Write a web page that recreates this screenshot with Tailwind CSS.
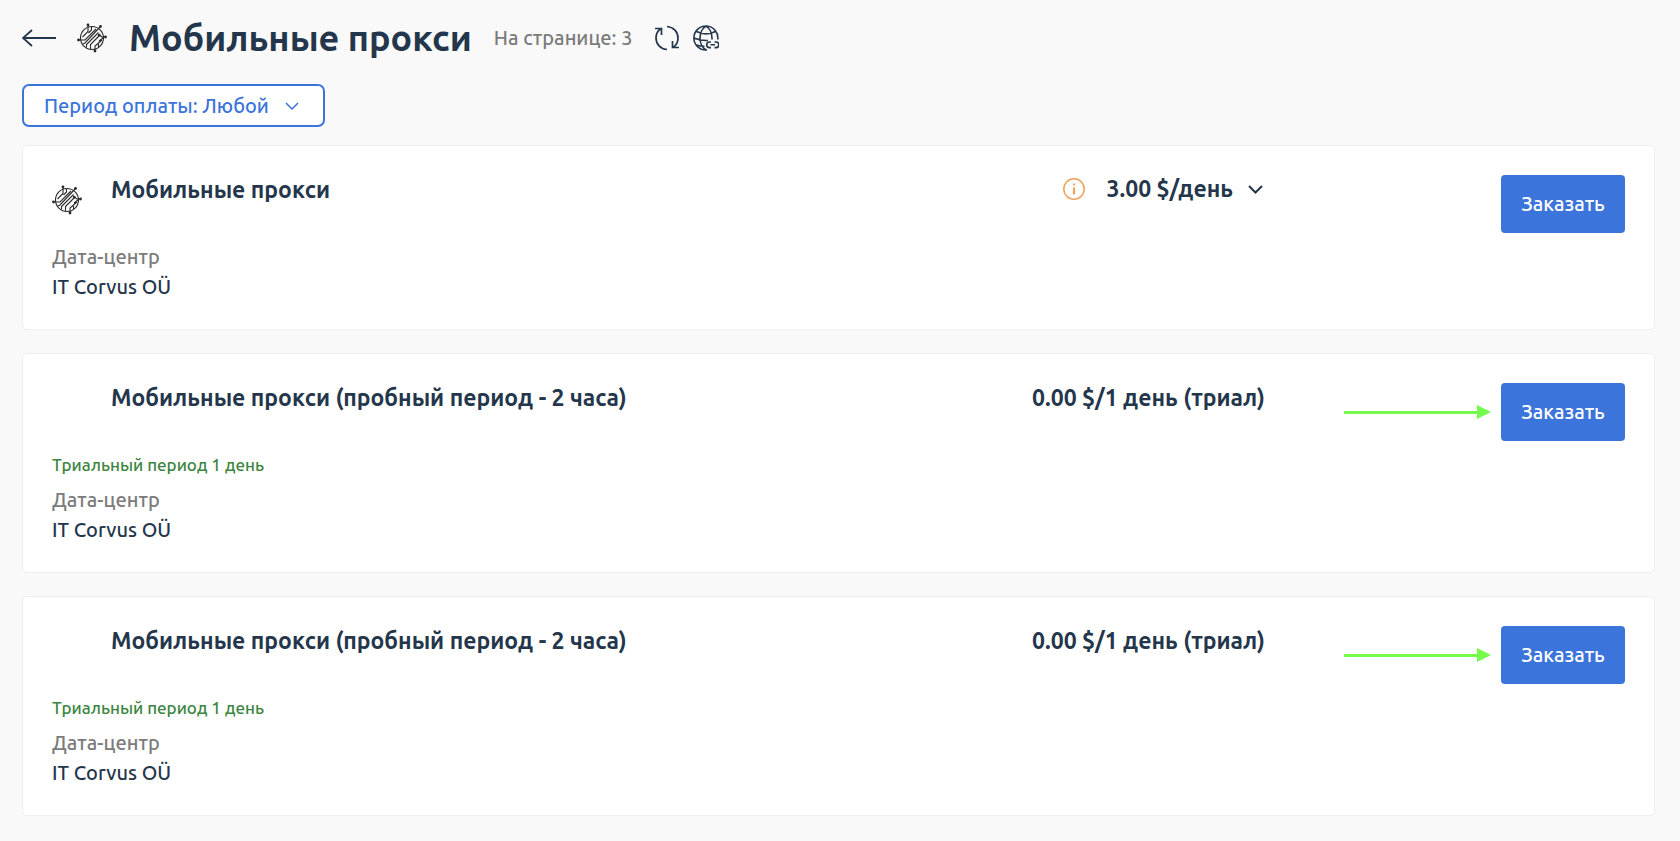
<!DOCTYPE html>
<html lang="ru">
<head>
    <meta charset="UTF-8">
    <meta name="viewport" content="width=device-width, initial-scale=1.0">
    <title>Мобильные прокси</title>
    <script src="https://cdn.jsdelivr.net/npm/@tailwindcss/browser@4"></script>
</head>

<body class="min-h-screen bg-[#f9f9f9] font-['Ubuntu','Noto_Sans',sans-serif] text-[#24364b]">

    <!-- shared icons -->
    <svg class="hidden" xmlns="http://www.w3.org/2000/svg">
        <symbol id="logo" viewBox="0 0 30 30">
            <g fill="none" stroke="#2a2a2a" stroke-width="1.1">
                <circle cx="15" cy="15" r="11.5"/>
                <path d="M11 2v6.500L5.500 14M1.500 17H8L19 6M23 4 8 20l-2 1M28.500 14H25l-3-2M18 28v-5l7-6M14.500 4v3l-3 3M21.500 9.500l-12 12v3M23.500 11.500l-4 4-6 6v4.500M26 15l-4 3M21.500 21v3"/>
            </g>
            <g fill="#2a2a2a">
                <circle cx="11" cy="2" r="1.400"/><circle cx="23.500" cy="3.500" r="1.400"/><circle cx="28.500" cy="14" r="1.400"/><circle cx="18" cy="28" r="1.400"/><circle cx="1.500" cy="17" r="1.400"/><circle cx="22" cy="12" r="1.200"/>
            </g>
        </symbol>
        <symbol id="pointer" viewBox="0 0 148 14">
            <path d="M0 7.500h136" stroke="#75fb4c" stroke-width="3"/>
            <path d="M133 0l14 7-14 7z" fill="#75fb4c"/>
        </symbol>
    </svg>

    <div class="pl-[22px] pr-[25px] pb-6">
        <header class="flex items-center h-[76px]">
            <a href="#" aria-label="Назад" class="mr-5">
                <svg class="w-[35px] h-5" viewBox="0 0 35 20" fill="none" stroke="currentColor" stroke-width="1.800">
                    <path d="M34 10H1M10 2L1 10l9 8"/>
                </svg>
            </a>
            <svg class="w-[30px] h-[30px]"><use href="#logo"/></svg>
            <h1 class="ml-[22px] text-[36px] leading-[48px] font-bold">Мобильные прокси</h1>
            <span class="ml-[22px] text-[20px] leading-[30px] font-medium text-[#7b7b7b]">На странице: 3</span>
            <button type="button" aria-label="Обновить" class="ml-[22px]">
                <svg class="w-[26px] h-[26px]" viewBox="0 0 26 26" fill="none" stroke="currentColor" stroke-width="1.700">
                    <path d="M13 24.500C6.500 24 2 19 2 13c0-4 2-7.500 5-9.500M1 3.500h6.500V10M13 1.500C19.500 2 24 7 24 13c0 4-2 7.500-5 9.500M25 22.500h-6.500V16"/>
                </svg>
            </button>
            <button type="button" aria-label="Язык" class="ml-[13px]">
                <svg class="w-[26px] h-[26px]" viewBox="0 0 26 26" fill="none" stroke="currentColor" stroke-width="1.600">
                    <path d="M24.800 14.500A12 12 0 1 0 14 25M13 25C9.500 23 7 18 7 13S9.500 3 13 1c3.500 2 6 7 6 12v1.500M3.500 6.500c6 3 13 3 19 0M1 13c3.500 1.500 8 2.500 12 2.500h2M3.500 20c3 1 5.500 1.300 8 1.300"/>
                    <path d="M18 17h-1.500a2.800 2.800 0 0 0 0 5.600H18M21.500 17H23a2.800 2.800 0 0 1 0 5.600h-1.500M17.500 19.800h4.500"/>
                </svg>
            </button>
        </header>

        <button type="button" class="mt-2 flex items-center justify-between w-[303px] h-[43px] pl-5 pr-6 rounded-[7px] border-2 border-[#3b74da] bg-white text-[20px] leading-[30px] font-medium text-[#3b74da]">
            <span>Период оплаты: Любой</span>
            <svg class="w-[14px] h-2" viewBox="0 0 14 8" fill="none" stroke="currentColor" stroke-width="1.500">
                <path d="M1 1l6 6 6-6"/>
            </svg>
        </button>

        <main class="mt-[18px] space-y-[23px]">
            <section class="px-[29px] pt-[29px] pb-[27px] bg-white border border-[#eeeeee] rounded-[5px]">
                <div class="flex items-start h-[67px]">
                    <svg class="w-[30px] h-[30px] mt-[10px] mr-[29px]"><use href="#logo"/></svg>
                    <h2 class="flex-1 text-[23px] leading-[30px] font-semibold">Мобильные прокси</h2>
                    <svg class="w-[22px] h-[22px] mt-[3px] mr-[22px]" viewBox="0 0 22 22" fill="none" stroke="#f0a05a">
                        <circle cx="11" cy="11" r="10.200" stroke-width="1.500"/>
                        <path d="M11 9.500v7M11 5.500v2" stroke-width="2.200"/>
                    </svg>
                    <button type="button" class="flex items-center text-[23px] leading-[28px] font-semibold">
                        3.00 $/день
                        <svg class="w-[15px] h-[9px] ml-[15px] mr-[2px]" viewBox="0 0 15 9" fill="none" stroke="currentColor" stroke-width="2">
                            <path d="M1 1l6.500 6.500L14 1"/>
                        </svg>
                    </button>
                    <div class="w-[236px]"></div>
                    <button type="button" class="w-[124px] h-[58px] rounded-[4px] bg-[#3b74da] text-white text-[20px] leading-[30px] font-medium">Заказать</button>
                </div>
                <dl class="text-[20px] leading-[30px] font-medium">
                    <dt class="text-[#7b7b7b]">Дата-центр</dt>
                    <dd>IT Corvus OÜ</dd>
                </dl>
            </section>

            <section class="px-[29px] pt-[29px] pb-[27px] bg-white border border-[#eeeeee] rounded-[5px]">
                <div class="flex items-start h-[67px]">
                    <h2 class="flex-1 pl-[59px] text-[23px] leading-[30px] font-semibold">Мобильные прокси (пробный период - 2 часа)</h2>
                    <p class="text-[23px] leading-[30px] font-semibold">0.00 $/1 день (триал)</p>
                    <div class="flex items-center justify-end w-[236px] h-[58px] pr-[9px]">
                        <svg class="w-[148px] h-[14px]"><use href="#pointer"/></svg>
                    </div>
                    <button type="button" class="w-[124px] h-[58px] rounded-[4px] bg-[#3b74da] text-white text-[20px] leading-[30px] font-medium">Заказать</button>
                </div>
                <p class="mb-[5px] text-[17px] leading-[30px] font-medium text-[#3c8541]">Триальный период 1 день</p>
                <dl class="text-[20px] leading-[30px] font-medium">
                    <dt class="text-[#7b7b7b]">Дата-центр</dt>
                    <dd>IT Corvus OÜ</dd>
                </dl>
            </section>

            <section class="px-[29px] pt-[29px] pb-[27px] bg-white border border-[#eeeeee] rounded-[5px]">
                <div class="flex items-start h-[67px]">
                    <h2 class="flex-1 pl-[59px] text-[23px] leading-[30px] font-semibold">Мобильные прокси (пробный период - 2 часа)</h2>
                    <p class="text-[23px] leading-[30px] font-semibold">0.00 $/1 день (триал)</p>
                    <div class="flex items-center justify-end w-[236px] h-[58px] pr-[9px]">
                        <svg class="w-[148px] h-[14px]"><use href="#pointer"/></svg>
                    </div>
                    <button type="button" class="w-[124px] h-[58px] rounded-[4px] bg-[#3b74da] text-white text-[20px] leading-[30px] font-medium">Заказать</button>
                </div>
                <p class="mb-[5px] text-[17px] leading-[30px] font-medium text-[#3c8541]">Триальный период 1 день</p>
                <dl class="text-[20px] leading-[30px] font-medium">
                    <dt class="text-[#7b7b7b]">Дата-центр</dt>
                    <dd>IT Corvus OÜ</dd>
                </dl>
            </section>
        </main>
    </div>

</body>
</html>
